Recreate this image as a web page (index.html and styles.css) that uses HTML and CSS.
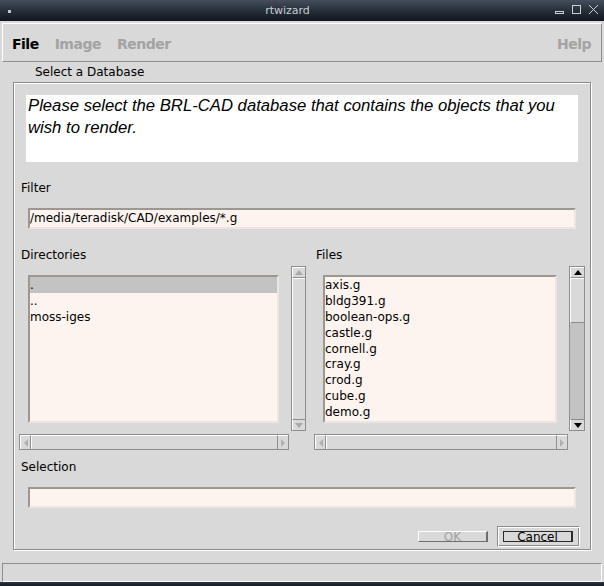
FILE: index.html
```html
<!DOCTYPE html>
<html>
<head>
<meta charset="utf-8">
<title>rtwizard</title>
<link rel="stylesheet" href="styles.css">
</head>
<body>
<div class="window">
  <div class="titlebar">
    <span class="winicon"></span>
    <span class="title">rtwizard</span>
    <svg class="controls" width="48" height="12" viewBox="0 0 48 12">
      <rect x="3.5" y="7.5" width="8" height="2" fill="none" stroke="#c9d0d8" stroke-width="1"/>
      <rect x="20.5" y="1.5" width="8" height="8" fill="none" stroke="#c9d0d8" stroke-width="1"/>
      <path d="M37 1 L46 10 M46 1 L37 10" stroke="#c9d0d8" stroke-width="1" fill="none"/>
    </svg>
  </div>
  <div class="client">
    <div class="menubar">
      <span class="menu">File</span>
      <span class="menu disabled">Image</span>
      <span class="menu disabled">Render</span>
      <span class="menu-spacer"></span>
      <span class="menu disabled">Help</span>
    </div>
    <div class="section-title">Select a Database</div>
    <div class="frame">
      <div class="message">Please select the BRL-CAD database that contains the objects that you wish to render.</div>
      <div class="label">Filter</div>
      <div class="entry">/media/teradisk/CAD/examples/*.g</div>
      <div class="lists">
        <div class="col col-dirs">
          <div class="col-label">Directories</div>
          <div class="list-row">
            <div class="listwrap">
              <div class="listbox">
                <div class="item selected">.</div>
                <div class="item">..</div>
                <div class="item">moss-iges</div>
              </div>
            </div>
            <div class="vscroll disabled">
              <div class="arrow up"><span class="tri-up"></span></div>
              <div class="thumb full"></div>
              <div class="arrow down"><span class="tri-down"></span></div>
            </div>
          </div>
          <div class="hscroll">
            <div class="harrow left"><span class="tri-left"></span></div>
            <div class="hthumb"></div>
            <div class="harrow right"><span class="tri-right"></span></div>
          </div>
        </div>
        <div class="col col-files">
          <div class="col-label">Files</div>
          <div class="list-row">
            <div class="listwrap">
              <div class="listbox">
                <div class="item">axis.g</div>
                <div class="item">bldg391.g</div>
                <div class="item">boolean-ops.g</div>
                <div class="item">castle.g</div>
                <div class="item">cornell.g</div>
                <div class="item">cray.g</div>
                <div class="item">crod.g</div>
                <div class="item">cube.g</div>
                <div class="item">demo.g</div>
              </div>
            </div>
            <div class="vscroll">
              <div class="arrow up"><span class="tri-up"></span></div>
              <div class="thumb"></div>
              <div class="trough"></div>
              <div class="arrow down"><span class="tri-down"></span></div>
            </div>
          </div>
          <div class="hscroll">
            <div class="harrow left"><span class="tri-left"></span></div>
            <div class="hthumb"></div>
            <div class="harrow right"><span class="tri-right"></span></div>
          </div>
        </div>
      </div>
      <div class="label sel-label">Selection</div>
      <div class="entry"></div>
      <div class="buttons">
        <div class="btn ok"><span>OK</span></div>
        <div class="focusring"><div class="btn cancel"><span>Cancel</span></div></div>
      </div>
    </div>
    <div class="statusbar"></div>
  </div>
  <div class="bottomstrip"></div>
</div>
</body>
</html>
```

FILE: styles.css
```css
* { box-sizing: border-box; }
html, body { margin: 0; padding: 0; }
body {
  background: #1a2029;
  font-family: "DejaVu Sans", sans-serif;
  font-size: 12px;
  color: #000;
}
.window { width: 604px; height: 586px; overflow: hidden; }

.titlebar {
  height: 21px;
  background: linear-gradient(#454e5b, #2a323d 45%, #10151c);
  display: flex;
  align-items: center;
}
.winicon {
  width: 3px; height: 3px;
  background: #bcc4cd;
  margin-left: 8px;
  margin-top: 1px;
}
.title {
  flex: 1;
  text-align: center;
  color: #c9ced4;
  font-size: 11px;
  padding-left: 12px;
  margin-top: -1px;
}
.controls { margin-right: 4px; margin-top: -1px; }

.client {
  height: 561px;
  background: #d9d9d9;
  padding-top: 2px;
}
.menubar {
  margin: 0 2px;
  height: 39px;
  border: 1px solid;
  border-color: #ffffff #8e8e8e #8e8e8e #ffffff;
  display: flex;
  align-items: center;
  padding: 2px 10px 0 9px;
  gap: 16px;
}
.menu {
  font-weight: bold;
  font-size: 14px;
  letter-spacing: -0.5px;
  color: #000;
}
.menu.disabled { color: #a3a3a3; }
.menu-spacer { flex: 1; }

.section-title {
  height: 20px;
  line-height: 20px;
  padding-left: 35px;
}

.frame {
  margin: 0 13px 0 13px;
  height: 468px;
  border: 1px solid #8c8c8c;
  box-shadow: inset 1px 1px 0 #ffffff, 1px 1px 0 #ffffff;
  padding: 12px 0 0 0;
}
.message {
  margin: 0 12px 0 12px;
  height: 67px;
  background: #ffffff;
  font-family: "Liberation Sans", Arial, sans-serif;
  font-style: italic;
  font-size: 16.7px;
  line-height: 22px;
  padding: 0 0 0 2px;
}
.label {
  margin-top: 18px;
  height: 16px;
  line-height: 16px;
  padding-left: 7px;
}
.sel-label { margin-top: 9px; }
.entry {
  margin: 12px 14px 0 14px;
  height: 21px;
  background: #fef4ef;
  border: 2px solid;
  border-color: #9d9791 #ece5e0 #ece5e0 #9d9791;
  line-height: 17px;
  white-space: nowrap;
}

.lists {
  margin: 17px 0 0 5px;
  display: grid;
  grid-template-columns: 287px 271px;
  column-gap: 8px;
}
.col-label {
  height: 16px;
  line-height: 18px;
  padding-left: 2px;
  margin-bottom: 4px;
}
.list-row {
  display: flex;
  height: 165px;
}
.col-dirs .list-row { gap: 3px; }
.col-files .list-row { gap: 2px; }
.col-dirs .listwrap { width: 269px; padding: 9px 9px 8px 9px; }
.col-files .listwrap { width: 254px; padding: 9px 10px 8px 9px; }
.listwrap { height: 165px; }
.listbox {
  height: 100%;
  background: #fef4ef;
  border: 2px solid;
  border-color: #9d9791 #ece5e0 #ece5e0 #9d9791;
  overflow: hidden;
}
.item {
  height: 15.9px;
  line-height: 17px;
  white-space: nowrap;
}
.item.selected { background: #c3c3c3; }

.vscroll {
  width: 15px;
  height: 165px;
  border: 1px solid #8e8e8e;
  display: flex;
  flex-direction: column;
  background: #d9d9d9;
}
.col-files .vscroll { width: 16px; }
.arrow {
  height: 11px;
  flex: none;
  display: flex;
  align-items: center;
  justify-content: center;
  border-left: 1px solid #fff;
  border-top: 1px solid #fff;
}
.arrow.up { border-bottom: 1px solid #8e8e8e; }
.arrow.down { border-top: 1px solid #8e8e8e; }
.tri-up {
  width: 0; height: 0;
  border-left: 4px solid transparent;
  border-right: 4px solid transparent;
  border-bottom: 5px solid #000;
}
.tri-down {
  width: 0; height: 0;
  border-left: 4px solid transparent;
  border-right: 4px solid transparent;
  border-top: 5px solid #000;
}
.disabled .tri-up { border-bottom-color: #a9a9a9; }
.disabled .tri-down { border-top-color: #a9a9a9; }
.thumb {
  height: 45px;
  flex: none;
  border-left: 1px solid #fff;
  border-top: 1px solid #fff;
  border-bottom: 1px solid #8e8e8e;
  background: #d9d9d9;
}
.thumb.full { flex: 1; height: auto; border-bottom: none; }
.trough { flex: 1; background: #c3c3c3; }

.hscroll {
  margin-top: 3px;
  height: 16px;
  border: 1px solid #8e8e8e;
  display: flex;
  background: #d9d9d9;
}
.col-dirs .hscroll { width: 270px; }
.col-files .hscroll { width: 254px; }
.harrow {
  width: 11px;
  flex: none;
  display: flex;
  align-items: center;
  justify-content: center;
  border-top: 1px solid #fff;
}
.harrow.left { border-right: 1px solid #8e8e8e; border-left: 1px solid #fff; }
.harrow.right { border-left: 1px solid #8e8e8e; }
.hthumb { flex: 1; border-top: 1px solid #fff; border-left: 1px solid #fff; }
.tri-left {
  width: 0; height: 0;
  border-top: 4px solid transparent;
  border-bottom: 4px solid transparent;
  border-right: 4px solid #b0b0b0;
}
.tri-right {
  width: 0; height: 0;
  border-top: 4px solid transparent;
  border-bottom: 4px solid transparent;
  border-left: 4px solid #b0b0b0;
}

.buttons {
  margin-top: 18px;
  height: 21px;
  display: flex;
  justify-content: flex-end;
  align-items: center;
  padding-right: 10px;
  gap: 9px;
}
.btn {
  height: 11px;
  overflow: hidden;
  text-align: center;
  border: 1px solid;
  font-size: 12px;
  line-height: 10px;
}
.btn span { display: inline-block; }
.btn.ok {
  width: 70px;
  border-color: #ffffff #6e6e6e #6e6e6e #ffffff;
  border-width: 1px 2px 1px 1px;
  color: #a3a3a3;
}
.btn.cancel {
  width: 70px;
  border-color: #2a2a2a;
  border-width: 1px 2px 1px 1px;
  color: #000;
}
.focusring {
  width: 83px;
  height: 21px;
  border: 1px solid;
  border-color: #8c8c8c #ffffff #ffffff #8c8c8c;
  box-shadow: inset 1px 1px 0 #ffffff, inset -1px -1px 0 #8c8c8c;
  padding: 4px 5px 0 5px;
}

.statusbar {
  margin: 13px 2px 0 2px;
  height: 19px;
  border: 1px solid;
  border-color: #8e8e8e #ffffff #ffffff #8e8e8e;
}
.bottomstrip {
  height: 4px;
  background: linear-gradient(#2b3440, #161b22);
}
```
